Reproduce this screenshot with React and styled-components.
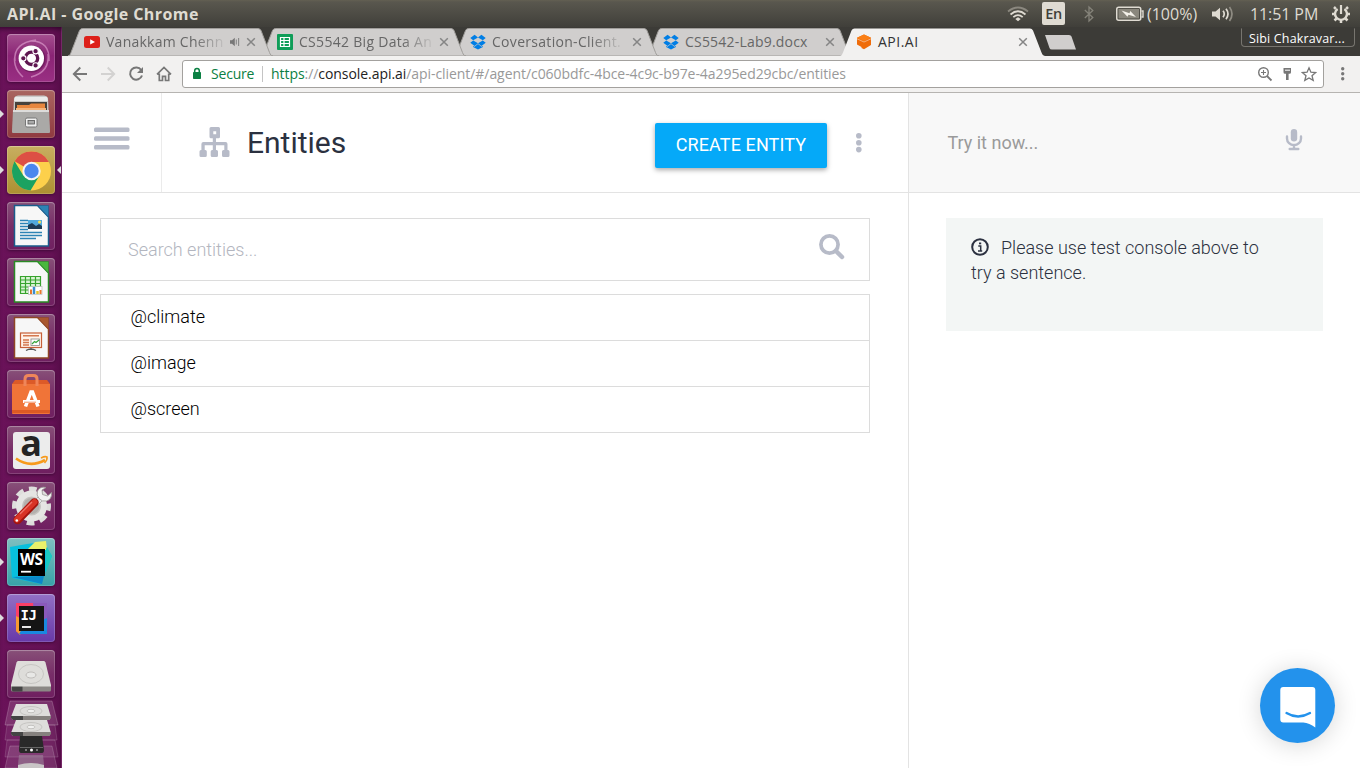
import React from "react";
import styled, { createGlobalStyle, css } from "styled-components";

const ui = `"Open Sans", "Noto Sans", sans-serif`;
const roboto = `Roboto, "Liberation Sans", sans-serif`;
const iconGrey = "#b7bbc8";

const Global = createGlobalStyle`
  * { box-sizing: border-box; }
  html, body { margin: 0; padding: 0; height: 100%; overflow: hidden; }
  svg { display: block; flex: none; }
`;

const Desktop = styled.div`
  width: 1360px;
  height: 768px;
  display: flex;
  flex-direction: column;
  overflow: hidden;
  background: #fff;
  font-family: ${ui};
`;

/* ---------- system panel ---------- */

const SystemBar = styled.header`
  height: 27px;
  flex: none;
  display: flex;
  align-items: center;
  justify-content: space-between;
  padding: 0 9px 0 7px;
  background: linear-gradient(#636052 0, #59574e 2px, #403f3a 100%);
  color: #dfdbd2;
`;

const WindowTitle = styled.div`
  font-size: 16px;
  line-height: 26px;
  font-weight: 700;
  letter-spacing: 0.41px;
  white-space: nowrap;
`;

const Indicators = styled.div`
  display: flex;
  align-items: center;
  height: 27px;
`;

const Indicator = styled.div`
  flex: none;
  width: ${(p) => p.$w}px;
  margin-right: ${(p) => p.$gap || 0}px;
  font-size: 16px;
  line-height: 26px;
  white-space: nowrap;
  letter-spacing: ${(p) => p.$ls || 0}px;
`;

const LangBadge = styled.div`
  width: 23px;
  height: 23px;
  margin-right: 19px;
  border-radius: 2px;
  background: #dfdbd2;
  color: #3f3e39;
  font-size: 14.5px;
  font-weight: 600;
  letter-spacing: -0.4px;
  line-height: 23px;
  text-align: center;
`;

const Workspace = styled.div`
  flex: 1;
  display: flex;
  min-height: 0;
`;

/* ---------- launcher ---------- */

const Launcher = styled.nav`
  width: 62px;
  flex: none;
  display: flex;
  flex-direction: column;
  gap: 8px;
  padding: 7px 0 0 7px;
  background: linear-gradient(90deg, #6a1259 0, #641154 52px, #570d49 61px, #7b2a6c 61px, #7b2a6c 62px);
  box-shadow: inset 0 5px 5px -3px rgba(20, 0, 20, 0.6);
  overflow: hidden;
`;

const Tile = styled.div`
  position: relative;
  width: 48px;
  height: 48px;
  flex: none;
  border-radius: 4px;
  background: ${(p) => p.$bg || "linear-gradient(#875078, #782d68 50%, #6f1f60)"};
  box-shadow: inset 0 0 0 1px rgba(255, 255, 255, 0.16), inset 0 1px 1px rgba(255, 255, 255, 0.2), 0 1px 3px rgba(30, 0, 30, 0.5);
`;

const Pip = styled.span`
  position: absolute;
  top: 20px;
  border: 4px solid transparent;
  ${(p) =>
    p.$side === "left"
      ? css`
          left: -7px;
          border-left-color: #ddd;
          border-right-width: 0;
        `
      : css`
          right: -6px;
          border-right-color: #ddd;
          border-left-width: 0;
        `}
`;

const Pile = styled.div`
  width: 48px;
  height: 68px;
  margin-top: -6px;
  flex: none;
`;

/* ---------- browser chrome ---------- */

const Browser = styled.main`
  flex: 1;
  min-width: 0;
  display: flex;
  flex-direction: column;
`;

const TabStrip = styled.div`
  height: 29px;
  flex: none;
  display: flex;
  align-items: flex-end;
  padding-left: 6px;
  background: #3c3b37;
  position: relative;
`;

const TabBox = styled.div`
  position: relative;
  z-index: ${(p) => p.$z};
  width: 205px;
  height: 28px;
  margin-right: -12px;
  padding: 0 17px 0 16px;
  display: flex;
  align-items: center;
  flex: none;
  color: ${(p) => (p.$active ? "#333" : "#666")};
`;

const TabShape = styled.svg`
  position: absolute;
  inset: 0;
  z-index: -1;
`;

const TabLabel = styled.span`
  margin-left: 6px;
  font-size: 14px;
  line-height: 26px;
  letter-spacing: ${(p) => p.$ls || 0}px;
  white-space: nowrap;
  ${(p) =>
    p.$fade &&
    css`
      mask-image: linear-gradient(90deg, #000 calc(100% - 30px), rgba(0, 0, 0, 0.12));
    `}
`;

const TabEnd = styled.span`
  margin-left: auto;
  display: flex;
  align-items: center;
  gap: 6px;
`;

const NewTab = styled.svg`
  align-self: center;
  margin: 2px 0 0 10px;
`;

const UserChip = styled.div`
  position: absolute;
  right: 5px;
  top: 1px;
  width: 114px;
  height: 19px;
  border: 1px solid #77756f;
  border-top-color: #3c3b37;
  border-radius: 0 0 4px 4px;
  color: #fff;
  font-size: 12.5px;
  line-height: 19px;
  padding-left: 7px;
  white-space: nowrap;
  letter-spacing: ${(p) => p.$ls}px;
`;

const Toolbar = styled.div`
  height: 37px;
  flex: none;
  display: flex;
  align-items: center;
  padding: 0 15px 0 10px;
  background: #f2f1f0;
  border-bottom: 1px solid #b6b4b1;
`;

const NavButtons = styled.div`
  display: flex;
  gap: 12px;
  margin-right: 10px;
`;

const Omnibox = styled.div`
  flex: 1;
  height: 28px;
  display: flex;
  align-items: center;
  border: 1px solid #a3a19e;
  border-radius: 3px;
  background: #fff;
  padding: 0 6px 0 8px;
  font-size: 14px;
  line-height: 26px;
  margin-right: 15.6px;
  white-space: nowrap;
`;

const Secure = styled.span`
  color: #0b8043;
  width: 43px;
  margin-left: 8px;
  letter-spacing: ${(p) => p.$ls}px;
`;

const Divider = styled.i`
  width: 1px;
  height: 16px;
  background: #c4c4c4;
  margin: 0 8px;
`;

const Url = styled.span`
  flex: 1;
  color: #999;
  letter-spacing: ${(p) => p.$ls}px;
`;
const Scheme = styled.span`
  color: #0b8043;
`;
const Host = styled.span`
  color: #222;
`;
const OmniIcons = styled.span`
  display: flex;
  gap: 6px;
`;

/* ---------- web page ---------- */

const Page = styled.div`
  flex: 1;
  display: flex;
  min-height: 0;
  position: relative;
  font-family: ${roboto};
  background: #fff;
`;

const Main = styled.section`
  width: 847px;
  flex: none;
  border-right: 1px solid #e3e3e3;
`;

const Header = styled.div`
  height: 100px;
  display: flex;
  border-bottom: 1px solid #e3e3e3;
`;

const MenuCell = styled.div`
  width: 100px;
  border-right: 1px solid #ebebeb;
  padding: 34px 0 0 32px;
`;

const TitleCell = styled.div`
  flex: 1;
  display: flex;
  align-items: center;
  padding: 0 45px 0 37px;
`;

const Title = styled.h1`
  flex: 1;
  margin: 0 0 0 17px;
  font-size: 30px;
  font-weight: 400;
  line-height: 40px;
  color: #2b3140;
`;

const CreateButton = styled.button`
  width: 172px;
  height: 45px;
  margin: 5px 28px 0 0;
  padding: 0 1px 2px 0;
  border: 0;
  border-radius: 2px;
  background: #05a9f8;
  box-shadow: 0 2px 5px rgba(0, 0, 0, 0.34);
  color: #fff;
  font: 400 18px/43px ${roboto};
  letter-spacing: 0.1px;
  white-space: nowrap;
`;

const Content = styled.div`
  padding: 25px 38px;
`;

const SearchBox = styled.div`
  height: 63px;
  display: flex;
  align-items: center;
  justify-content: space-between;
  border: 1px solid #dcdcdc;
  padding: 0 24px 0 27px;
  color: #b3b6c0;
  font-size: 18px;
  font-weight: 300;
`;

const EntityList = styled.ul`
  margin: 13px 0 0;
  padding: 0;
  list-style: none;
  border: 1px solid #dcdcdc;
`;

const EntityRow = styled.li`
  height: 46px;
  padding-left: 29.5px;
  font-size: 18px;
  line-height: 44px;
  font-weight: 300;
  color: #000;
  & + & {
    border-top: 1px solid #dcdcdc;
  }
  &:first-child {
    height: 45px;
  }
`;

const Side = styled.aside`
  flex: 1;
`;

const TryBar = styled.div`
  height: 100px;
  display: flex;
  align-items: center;
  justify-content: space-between;
  padding: 0 57px 0 38.4px;
  background: #f8f8f8;
  border-bottom: 1px solid #e3e3e3;
  color: #9a9a9a;
  font-size: 18px;
`;

const Hint = styled.div`
  width: 377px;
  height: 113px;
  margin: 25px 0 0 37px;
  padding: 17px 50px 0 25px;
  background: #f3f6f5;
  color: #2b3140;
  font-size: 18px;
  font-weight: 300;
  line-height: 25px;
`;

const HintIcon = styled.svg`
  && {
    display: inline-block;
  }
  vertical-align: -1.5px;
  margin-right: 12px;
`;

const ChatButton = styled.button`
  position: absolute;
  right: 25px;
  bottom: 25px;
  width: 75px;
  height: 75px;
  padding: 0;
  border: 0;
  border-radius: 50%;
  background: #2392ec;
  box-shadow: 0 2px 24px rgba(0, 0, 0, 0.16);
`;

/* ---------- drawings ---------- */

const Youtube = () => (
  <svg width="16" height="16" viewBox="0 0 16 16">
    <rect y="2" width="16" height="12" rx="2.5" fill="#dd2019" />
    <path d="M6.2 5.3v5.2L11 8z" fill="#fff" />
  </svg>
);
const Sheets = () => (
  <svg width="16" height="16" viewBox="0 0 16 16">
    <rect width="16" height="16" rx="1" fill="#0f9d58" />
    <path d="M3.5 3.5h9v9h-9zM3.5 6.5h9M3.5 9.5h9M7 3.5v9" fill="none" stroke="#fff" strokeWidth="1.2" />
  </svg>
);
const Dropbox = () => (
  <svg width="16" height="16" viewBox="0 0 16 16" fill="#007ee5">
    <path d="M4.6.8L8 3.4 3.2 6.3.3 4zM11.4.8L8 3.4l4.8 2.9L15.7 4zM.3 8.8l2.9-2.4L8 9.3l-3.4 2.8zM15.7 8.8l-2.9-2.4L8 9.3l3.4 2.8zM8 10l3.5 2.8 1.4-.9v1L8 15.6l-4.9-2.7v-1l1.4.9z" />
  </svg>
);
const ApiCube = () => (
  <svg width="16" height="16" viewBox="0 0 16 16">
    <path d="M8 .5l7 3.3V11l-7 4.2-2.500-1.200V13L1 10.500V3.800z" fill="#ef6c0a" />
    <path d="M8 .5l7 3.300L8 7 1 3.800z" fill="#fa7f16" />
    <path d="M1 4.800L8 8l7-3.200" fill="none" stroke="#f7d0b0" strokeWidth=".7" />
  </svg>
);
const Close = () => (
  <svg width="10" height="10" viewBox="0 0 10 10">
    <path d="M1.200 1.200l7.600 7.600M8.800 1.200L1.200 8.800" stroke="#858585" strokeWidth="1.500" />
  </svg>
);
const TabSound = () => (
  <svg width="10" height="10" viewBox="0 0 10 10">
    <path d="M0 3.200h2L4.800.800v8.400L2 6.800H0z" fill="#777" />
    <path d="M6.300 2.500v5M8.600 1v8" stroke="#888" strokeWidth="1.100" />
  </svg>
);

const Wifi = () => (
  <svg width="22" height="16" viewBox="0 0 22 16" fill="none" strokeWidth="1.700">
    <path d="M1 5.500Q11-2.500 21 5.500" stroke="#8b887f" />
    <path d="M3.500 8.500Q11 2 18.500 8.500M6.300 11.200Q11 7 15.700 11.200" stroke="#dfdbd2" />
    <path d="M8.300 13L11 11.300 13.700 13 11 15.200z" fill="#dfdbd2" />
  </svg>
);
const Bluetooth = () => (
  <svg width="10" height="18" viewBox="0 0 10 18">
    <path d="M.8 5l8 7.500L5 16V2l3.800 3.500-8 7.500" fill="none" stroke="#85837a" strokeWidth="1.300" />
  </svg>
);
const Battery = () => (
  <svg width="28" height="16" viewBox="0 0 28 16">
    <rect x=".75" y="1.250" width="24" height="13" rx="2" fill="none" stroke="#dfdbd2" strokeWidth="1.500" />
    <rect x="2.500" y="3" width="20.500" height="9.500" fill="#8a877d" />
    <path d="M25.500 5H27v6h-1.500" fill="none" stroke="#dfdbd2" strokeWidth="1.400" />
    <path d="M5.500 4.500l8 2.800.8-2.300 5.700 6-7.500-2.200-1 2z" fill="#f4f1ea" />
  </svg>
);
const Volume = () => (
  <svg width="22" height="16" viewBox="0 0 22 16">
    <path d="M0 5.500h3.500L8 1.800v12.400l-4.500-3.700H0z" fill="#dfdbd2" />
    <path d="M11 4.800q2.500 3.200 0 6.400M14 2.800q4 5.200 0 10.400" fill="none" stroke="#dfdbd2" strokeWidth="1.700" />
    <path d="M17.500 1q5 7 0 14" fill="none" stroke="#8f8c83" strokeWidth="1.700" />
  </svg>
);
const PowerGear = () => (
  <svg width="20" height="20" viewBox="0 0 20 20" fill="none" stroke="#dfdbd2">
    <path d="M6.600 4.900a6 6 0 1 0 6.800 0" strokeWidth="2.400" />
    <path d="M10 1v9" strokeWidth="2.200" />
    <path d="M4.800 4.800L3 3M15.200 4.800L17 3M4 10H1M16 10h3M5.500 14.500l-2 2M14.500 14.500l2 2M10 16v3" strokeWidth="2.500" />
  </svg>
);

const Back = ({ c = "#777" }) => (
  <svg width="16" height="16" viewBox="0 0 16 16">
    <path d="M8.300 1.500L1.800 8l6.500 6.500M2 8h13" fill="none" stroke={c} strokeWidth="1.900" />
  </svg>
);
const Forward = () => (
  <svg width="16" height="16" viewBox="0 0 16 16">
    <path d="M7.700 1.500L14.200 8l-6.500 6.500M14 8H1" fill="none" stroke="#d3d2d1" strokeWidth="1.900" />
  </svg>
);
const Reload = () => (
  <svg width="16" height="16" viewBox="0 0 16 16">
    <path d="M13.200 4A6.100 6.100 0 1 0 14 9.500" fill="none" stroke="#777" strokeWidth="2" />
    <path d="M15 1v6H9z" fill="#777" />
  </svg>
);
const Home = () => (
  <svg width="16" height="16" viewBox="0 0 16 16">
    <path d="M1 8.300L8 1.500l7 6.800M3.300 7.500v7h3.200v-4.200h3v4.200h3.200v-7" fill="none" stroke="#777" strokeWidth="1.700" />
  </svg>
);
const Lock = () => (
  <svg width="12" height="14" viewBox="0 0 12 14">
    <rect x="2" y="5" width="8" height="7" rx=".8" fill="#0b8043" />
    <path d="M3.700 5.500V3.700a2.300 2.300 0 0 1 4.600 0v1.800" fill="none" stroke="#0b8043" strokeWidth="1.500" />
  </svg>
);
const ZoomIn = () => (
  <svg width="16" height="16" viewBox="0 0 16 16" fill="none" stroke="#777">
    <circle cx="6.500" cy="6.500" r="4.800" strokeWidth="1.400" />
    <path d="M10 10l4.500 4.500" strokeWidth="1.800" />
    <path d="M4 6.500h5M6.500 4v5" strokeWidth="1.100" />
  </svg>
);
const Key = () => (
  <svg width="16" height="16" viewBox="0 0 16 16" fill="#777">
    <path d="M4.500 2h7.500v4.200q0 1.500-1.500 1.500H9.600V14H7V7.700h-1q-1.500 0-1.500-1.500z" />
    <path d="M6 4.200h5" stroke="#fff" />
  </svg>
);
const Star = () => (
  <svg width="16" height="16" viewBox="0 0 16 16">
    <path d="M8 1.800l1.900 4.400 4.800.4-3.700 3.100 1.200 4.700L8 11.900l-4.200 2.500L5 9.700 1.300 6.600l4.800-.4z" fill="none" stroke="#777" strokeWidth="1.300" />
  </svg>
);
const Dots = ({ r, step, fill }) => (
  <svg width={r * 2 + 2} height={step * 2 + r * 2 + 2}>
    {[0, 1, 2].map((i) => (
      <circle key={i} cx={r + 1} cy={r + 1 + i * step} r={r} fill={fill} />
    ))}
  </svg>
);

const Burger = () => (
  <svg width="36" height="24" viewBox="0 0 36 24" fill={iconGrey}>
    <rect y=".6" width="35.500" height="4.500" rx="1.500" />
    <rect y="9.300" width="35.500" height="4.500" rx="1.500" />
    <rect y="18" width="35.500" height="4.500" rx="1.500" />
  </svg>
);
const Sitemap = () => (
  <svg width="31" height="32" viewBox="0 0 31 32" fill={iconGrey}>
    <path fillRule="evenodd" d="M12 0h7.500q1.500 0 1.500 1.500v8.300q0 1.500-1.500 1.500H17v3.700h9.500q2 0 2 2V23h.5q1.500 0 1.500 1.500v4q0 1.500-1.500 1.500h-4.500q-1.500 0-1.500-1.500v-4q0-1.500 1.500-1.500h.8v-4.800H17V23h.5q1.500 0 1.500 1.500v4q0 1.500-1.500 1.500h-4.300q-1.500 0-1.500-1.500v-4q0-1.500 1.500-1.500h.6v-4.800H5.700V23h.6q1.500 0 1.500 1.500v4q0 1.500-1.500 1.500H2q-1.500 0-1.500-1.500v-4Q.5 23 2 23h.4v-6q0-2 2-2h9.400v-3.700H12q-1.500 0-1.500-1.500V1.500Q10.500 0 12 0zM14.300 4.200v3.100h2.900V4.200z" />
  </svg>
);
const Magnifier = () => (
  <svg width="26" height="32" viewBox="0 0 26 32" fill="none" stroke={iconGrey}>
    <circle cx="10.500" cy="10.500" r="8.600" strokeWidth="3.700" />
    <path d="M17 17l6 6" strokeWidth="4.500" strokeLinecap="round" />
  </svg>
);
const Mic = () => (
  <svg width="18" height="28" viewBox="0 0 18 28" fill={"none"} stroke={iconGrey}>
    <rect x="5.800" y="0" width="6.400" height="12.500" rx="3.200" fill={iconGrey} stroke="none" />
    <path d="M2 7.500v2a7 6.600 0 0 0 14 0v-2M9 16v4M4.700 20h8.600" strokeWidth="2.400" strokeLinecap="round" />
  </svg>
);

/* launcher artwork, 48 x 48 each */
const Art = ({ children }) => (
  <svg width="48" height="48" viewBox="0 0 48 48">
    {children}
  </svg>
);
const DashArt = () => (
  <Art>
    <g fill="none" stroke="#e4a8d6" strokeWidth="1.500" opacity=".6">
      <path d="M24 7Q43 7 42 27M41 20Q43 38 24 43M16 43Q4 32 9 18M8 27Q6 9 29 6" />
    </g>
    <circle cx="25" cy="25" r="13.500" fill="#3c0a32" opacity=".35" />
    <circle cx="24.300" cy="24.300" r="12.700" fill="#fff" />
    <circle cx="24.500" cy="24.300" r="6.200" fill="none" stroke="#5e1650" strokeWidth="3.300" />
    <g fill="#5e1650" stroke="#fff" strokeWidth="1.100">
      <circle cx="16.300" cy="24.300" r="2.700" />
      <circle cx="28.600" cy="17.200" r="2.700" />
      <circle cx="28.600" cy="31.400" r="2.700" />
    </g>
  </Art>
);
const FilesArt = () => (
  <Art>
    <path d="M7 8q1-2.500 4-2.500h26q3 0 4 2.500l1.500 34H5.500z" fill="#c9c9c7" />
    <path d="M8 7h32l1 4H7z" fill="#ebebea" />
    <rect x="8" y="12" width="32" height="9" fill="#47423c" />
    <path d="M10 15h12l2-1.500h14V21H10z" fill="#e8873e" />
    <path d="M9 18h30v3H9z" fill="#f5b57c" />
    <path d="M6 20h36l1 22q0 1-1 1H6q-1 0-1-1z" fill="#aaa9a7" />
    <path d="M6 20h36v2H6z" fill="#dddcdb" />
    <rect x="18.500" y="28" width="11.500" height="9" rx="1.500" fill="#eee" stroke="#777" />
    <rect x="21" y="30.500" width="6.500" height="3.500" fill="#aaa" stroke="#555" strokeWidth=".8" />
  </Art>
);
const ChromeArt = () => (
  <Art>
    <circle cx="24.500" cy="25" r="19.500" fill="#fdd04b" />
    <path d="M24.500 25L7.600 15.300A19.500 19.500 0 0 1 41.400 15.300L41.800 16H24.500z" fill="#dd5044" />
    <path d="M7.600 15.300A19.500 19.500 0 0 0 23.500 44.500L32.500 29.600 24.500 34 16 29z" fill="#1ba261" />
    <circle cx="24.500" cy="25" r="9.200" fill="#f4f4f4" />
    <circle cx="24.500" cy="25" r="7.200" fill="#4a87ee" />
  </Art>
);
const DocArt = ({ color, light, children }) => (
  <Art>
    <path d="M7.500 3.500h23l11 11.500v29h-34z" fill="#f7f7f7" stroke={color} strokeWidth="1.500" />
    <path d="M30.500 3.500h11V15z" fill={light} stroke={color} strokeWidth=".6" />
    {children}
  </Art>
);
const WriterArt = () => (
  <DocArt color="#1a5c8c" light="#2d83b5">
    <path d="M13 18.500h8M13 21.500h8M13 24.500h8M13 27.500h8M13 30.500h22M13 33.500h22M13 36.500h16" stroke="#2d83b5" strokeWidth="1.600" />
    <rect x="21" y="18" width="14" height="9" fill="#51a9dc" />
    <path d="M21 27v-4l4-2 4 3 3-2 3 2v3z" fill="#1d3c55" />
    <circle cx="32.500" cy="20" r="1.500" fill="#f5e14c" />
  </DocArt>
);
const CalcArt = () => (
  <DocArt color="#2a8a25" light="#49b73d">
    <path d="M13.500 18.500h20v17h-20z" fill="#d9f3d4" />
    <path d="M13.500 18.500h20v17h-20zM13.500 22h20M13.500 25.500h20M13.500 29h20M13.500 32h20M18.500 18.500v17M23.500 18.500v17M28.500 18.500v17" fill="none" stroke="#37a32e" strokeWidth="1.200" />
    <rect x="21.500" y="28.500" width="13.500" height="8" fill="#fff" stroke="#bbb" strokeWidth=".7" />
    <path d="M24 36v-4.500M33.500 36v-4" stroke="#e8762d" strokeWidth="2" />
    <path d="M27 36v-7" stroke="#3b8dce" strokeWidth="2.500" />
    <path d="M30.500 36v-3" stroke="#e6c229" strokeWidth="2.500" />
  </DocArt>
);
const ImpressArt = () => (
  <DocArt color="#8f4524" light="#a9582f">
    <rect x="13.500" y="19" width="21" height="14.500" fill="#fff3ea" stroke="#c76038" strokeWidth="1.200" />
    <path d="M16 21.800h16M16 26h6M16 28.500h6M16 31h6" stroke="#d4784f" strokeWidth="1.400" />
    <rect x="24" y="25" width="8.500" height="6.500" fill="#fff" stroke="#888" strokeWidth=".8" />
    <path d="M25 30l2.500-2.500 1.500 1 3-2.500" fill="none" stroke="#36a53b" strokeWidth="1.200" />
    <path d="M24 34v2M19 36.500q5-3 10 0" stroke="#555" strokeWidth="1.400" fill="none" />
  </DocArt>
);
const SoftwareArt = () => (
  <Art>
    <path d="M5 14l3-4h32l3 4v29H5z" fill="#dc5a28" />
    <path d="M5 14h38v29q0 1-1 1H6q-1 0-1-1z" fill="#f07438" />
    <path d="M5 40h38v3H5z" fill="#dc5a24" />
    <path d="M18 16V9q0-3.500 3.500-3.500h5Q30 5.500 30 9v7" fill="none" stroke="#ef865a" strokeWidth="3" />
    <path d="M18.500 36.500L24 22h1.500L31 36.500" fill="none" stroke="#fff" strokeWidth="3.500" />
    <path d="M16 31.500h17" stroke="#fff" strokeWidth="3" />
    <path d="M17 32.200h12" stroke="#f07438" strokeWidth=".8" />
  </Art>
);
const AmazonA = styled.span`
  position: absolute;
  left: 7px;
  top: 4px;
  width: 34px;
  height: 36px;
  text-align: center;
  font: 700 36px/26px "Open Sans", sans-serif;
  color: #242424;
`;
const AmazonArt = () => (
  <>
    <Art>
      <rect x="6" y="6" width="37" height="37" rx="3" fill="#ececec" />
      <path d="M9 32.500q14 10 29 1.500" fill="none" stroke="#f79a1c" strokeWidth="2.600" />
      <path d="M34 32q4-2 6-1 .5 3-2.500 6" fill="none" stroke="#f79a1c" strokeWidth="1.600" />
    </Art>
    <AmazonA>a</AmazonA>
  </>
);
const SettingsArt = () => (
  <Art>
    <circle cx="24.500" cy="24" r="16.500" fill="none" stroke="#dededc" strokeWidth="6" strokeDasharray="7.500 5.460" strokeDashoffset="3" />
    <circle cx="24.500" cy="24" r="12.500" fill="#c5c3c0" stroke="#e5e5e3" strokeWidth="6" />
    <circle cx="24.500" cy="24" r="8" fill="#b3b0ad" />
    <path d="M26 20l7-7 4 4-7 7z" fill="#e5e5e5" stroke="#999" strokeWidth=".7" />
    <path d="M39 5.500q-6-1.500-8.500 3.500-1.500 4 1.500 7.500t7.500 2.500q5.500-1.500 5-8.500l-4 3.500-5-1.500-.5-4.500z" fill="#f3f3f2" stroke="#9a9896" strokeWidth=".8" />
    <path d="M10.500 38L27.500 20.500" stroke="#a3150f" strokeWidth="8.500" strokeLinecap="round" />
    <path d="M10 37.500L27.500 20" stroke="#d83426" strokeWidth="6" strokeLinecap="round" />
    <path d="M13 32L25 20" stroke="#f0756a" strokeWidth="1.200" />
    <circle cx="9.800" cy="38.500" r="1.300" fill="#fff" />
  </Art>
);
const Logo = styled.span`
  position: absolute;
  left: ${(p) => p.$x}px;
  top: ${(p) => p.$y}px;
  font: 700 ${(p) => p.$s}px/14px ${(p) => p.$f || `"Open Sans", sans-serif`};
  letter-spacing: ${(p) => p.$ls || 0}px;
  color: #fff;
`;
const WebstormArt = () => (
  <>
    <Art>
      <path d="M3 9l17-3 16-2 9 14-7 17-4 11-29-6z" fill="#08c0dd" />
      <path d="M20 12L28 4l11-1 1 9z" fill="#eaf06a" />
      <path d="M40 9l5 9-6 16V11z" fill="#1cc9c0" />
      <path d="M5 39l30 7 2-8z" fill="#0b87c9" />
      <rect x="11" y="11" width="27" height="27" fill="#000" />
      <path d="M14 33.700h10" stroke="#fff" strokeWidth="1.800" />
    </Art>
    <Logo $x={13} $y={13.5} $s={15.5} $ls={-0.5}>WS</Logo>
  </>
);
const IdeaArt = () => (
  <>
    <Art>
      <path d="M9 9h18l-4 15L9 38z" fill="#fc3f67" />
      <path d="M9 22l10 5-6 14-4-4z" fill="#f89a31" />
      <path d="M26 9h14v17l-10 2z" fill="#8a59ba" />
      <path d="M40 24v16H12l3-5z" fill="#1989df" />
      <rect x="12" y="12" width="25" height="25" fill="#151515" />
      <path d="M15 33h9" stroke="#fff" strokeWidth="1.800" />
    </Art>
    <Logo $x={13.5} $y={14} $s={14} $ls={-0.5} $f={`"DejaVu Sans Mono", monospace`}>IJ</Logo>
  </>
);
const DriveArt = () => (
  <Art>
    <path d="M4 36v4q0 1.500 1.500 1.500h37Q44 41.500 44 40v-4z" fill="#8b8885" />
    <path d="M5 36v4q0 1.500 1.500 1.500h9V36z" fill="#444" />
    <path d="M11 11h26q1 0 1.500 1.500L44 35v1.500H4V35l5.500-22.500Q10 11 11 11z" fill="#deddda" />
    <ellipse cx="24" cy="24" rx="12.500" ry="9.500" fill="none" stroke="#c6c5c2" />
    <ellipse cx="24" cy="25" rx="5" ry="3" fill="#e8e8e6" stroke="#b5b3b0" strokeWidth=".8" />
  </Art>
);
const slab = (y) => (
  <g>
    <path d={`M9 ${y}h31l4 13-2 3H6l-2-3z`} fill="#dedddb" />
    <ellipse cx="24" cy={y + 7} rx="11" ry="4.500" fill="none" stroke="#c6c5c2" />
    <ellipse cx="24" cy={y + 7} rx="4" ry="1.700" fill="#f1f1f0" stroke="#b5b3b0" strokeWidth=".7" />
    <path d={`M4 ${y + 12}h40v2l-2 2H6l-2-2z`} fill="#85817e" />
    <path d={`M4 ${y + 12}h12v4H6l-2-2z`} fill="#444" />
  </g>
);
const PileSvg = styled.svg`
  overflow: visible;
`;
const PileArt = () => (
  <PileSvg width="48" height="68" viewBox="0 0 48 68">
    <path d="M3 1h42l6 24H-2z" fill="#fff" fillOpacity=".14" stroke="#fff" strokeOpacity=".2" />
    <path d="M0 25h48l2 15H-2z" fill="#fff" fillOpacity=".08" stroke="#fff" strokeOpacity=".14" />
    <path d="M0 40h48l3 17H-2z" fill="#fff" fillOpacity=".08" stroke="#fff" strokeOpacity=".14" />
    <path d="M3 46h42l5 22H-2z" fill="#fff" fillOpacity=".12" stroke="#fff" strokeOpacity=".18" />
    <path d="M13 36h22l2 14q0 3-2 3H14q-2 0-2-3z" fill="#292929" />
    <path d="M13 47.500h23" stroke="#666" />
    <circle cx="24.500" cy="50" r="1.500" fill="#fff" />
    <path d="M20 50h-2M29 50h2" stroke="#ccc" />
    {slab(20)}
    {slab(4)}
    <path d="M12 55h24l1 9v4H11v-4z" fill="#9d829a" fillOpacity=".6" />
    <path d="M11 65q13-4 26 0v3H11z" fill="#c9c5c6" />
  </PileSvg>
);

const apps = [
  { art: DashArt, bg: "linear-gradient(#a4508f, #8a2475 45%, #9a2f83)" },
  { art: FilesArt, bg: "linear-gradient(#a96560, #8f3a40)", left: true },
  { art: ChromeArt, bg: "linear-gradient(#c8ae60, #ad9032)", left: true, right: true },
  { art: WriterArt },
  { art: CalcArt },
  { art: ImpressArt },
  { art: SoftwareArt },
  { art: AmazonArt },
  { art: SettingsArt },
  { art: WebstormArt, bg: "linear-gradient(#7fbfc0, #37a2a8)", left: true },
  { art: IdeaArt, bg: "linear-gradient(#9270c4, #6838a8)", left: true },
  { art: DriveArt },
];

const tabs = [
  { icon: Youtube, label: "Vanakkam Chenn", fade: true, sound: true, ls: 0.25 },
  { icon: Sheets, label: "CS5542 Big Data An", fade: true, ls: 0.3 },
  { icon: Dropbox, label: "Coversation-Client.", fade: true, ls: 0.3 },
  { icon: Dropbox, label: "CS5542-Lab9.docx", ls: 0.2 },
  { icon: ApiCube, label: "API.AI", active: true, ls: 0.5 },
];

function Tab({ tab, index }) {
  const Icon = tab.icon;
  return (
    <TabBox $z={tab.active ? 10 : 8 - index} $active={tab.active}>
      <TabShape width="205" height="28" viewBox="0 0 205 28">
        <path
          d="M0 28C2 27.500 2 26.500 3 24.500L11.500 2.500Q12.500.5 14.500.5H190Q192 .5 193 2.500L201.500 24.500C202.500 27 203 27.500 205 28z"
          fill={tab.active ? "#f2f1f0" : "#d0cecd"}
          stroke={tab.active ? "none" : "#a09e9b"}
        />
      </TabShape>
      <Icon />
      <TabLabel $fade={tab.fade} $ls={tab.ls}>
        {tab.label}
      </TabLabel>
      <TabEnd>
        {tab.sound && <TabSound />}
        <Close />
      </TabEnd>
    </TabBox>
  );
}

export default function App() {
  return (
    <Desktop>
      <Global />
      <SystemBar>
        <WindowTitle>API.AI - Google Chrome</WindowTitle>
        <Indicators>
          <Indicator $w={22} $gap={13}><Wifi /></Indicator>
          <LangBadge>En</LangBadge>
          <Indicator $w={10} $gap={22}><Bluetooth /></Indicator>
          <Indicator $w={28} $gap={3}><Battery /></Indicator>
          <Indicator $w={52} $gap={13} $ls={0}>(100%)</Indicator>
          <Indicator $w={22} $gap={16}><Volume /></Indicator>
          <Indicator $w={68} $gap={13} $ls={-0.1}>11:51 PM</Indicator>
          <Indicator $w={20}><PowerGear /></Indicator>
        </Indicators>
      </SystemBar>
      <Workspace>
        <Launcher>
          {apps.map(({ art: Drawing, bg, left, right }, i) => (
            <Tile key={i} $bg={bg}>
              <Drawing />
              {left && <Pip $side="left" />}
              {right && <Pip $side="right" />}
            </Tile>
          ))}
          <Pile><PileArt /></Pile>
        </Launcher>
        <Browser>
          <TabStrip>
            {tabs.map((tab, i) => (
              <Tab key={i} tab={tab} index={i} />
            ))}
            <NewTab width="34" height="17" viewBox="0 0 34 17">
              <path d="M2 1h24q2 0 2.500 1.500L33 15.500H9q-2 0-2.500-1.500z" fill="#d0cecd" />
            </NewTab>
            <UserChip $ls={0.15}>Sibi Chakravar...</UserChip>
          </TabStrip>
          <Toolbar>
            <NavButtons>
              <Back />
              <Forward />
              <Reload />
              <Home />
            </NavButtons>
            <Omnibox>
              <Lock />
              <Secure $ls={-0.2}>Secure</Secure>
              <Divider />
              <Url $ls={-0.06}>
                <Scheme>https</Scheme>://<Host>console.api.ai</Host>
                /api-client/#/agent/c060bdfc-4bce-4c9c-b97e-4a295ed29cbc/entities
              </Url>
              <OmniIcons>
                <ZoomIn />
                <Key />
                <Star />
              </OmniIcons>
            </Omnibox>
            <Dots r={1.7} step={5} fill="#777" />
          </Toolbar>
          <Page>
            <Main>
              <Header>
                <MenuCell><Burger /></MenuCell>
                <TitleCell>
                  <Sitemap />
                  <Title>Entities</Title>
                  <CreateButton>CREATE ENTITY</CreateButton>
                  <Dots r={2.8} step={6.9} fill={iconGrey} />
                </TitleCell>
              </Header>
              <Content>
                <SearchBox>
                  Search entities...
                  <Magnifier />
                </SearchBox>
                <EntityList>
                  <EntityRow>@climate</EntityRow>
                  <EntityRow>@image</EntityRow>
                  <EntityRow>@screen</EntityRow>
                </EntityList>
              </Content>
            </Main>
            <Side>
              <TryBar>
                Try it now...
                <Mic />
              </TryBar>
              <Hint>
                <HintIcon width="18" height="18" viewBox="0 0 18 18">
                  <circle cx="9" cy="9" r="7.800" fill="none" stroke="#2b3140" strokeWidth="2" />
                  <path d="M7.300 7.900H9.700V12.800M7 12.900h4.200" stroke="#2b3140" strokeWidth="1.500" fill="none" />
                  <rect x="8" y="4.500" width="2.200" height="1.800" fill="#2b3140" />
                </HintIcon>
                Please use test console above to try a sentence.
              </Hint>
            </Side>
            <ChatButton aria-label="Chat">
              <svg width="75" height="75" viewBox="0 0 75 75">
                <path d="M23.300 19h29q3 0 3 3v37.500q-6-4.500-12-5h-20q-3 0-3-3V22q0-3 3-3z" fill="#fff" />
                <path d="M26.500 45q11.500 7 23.500 0" fill="none" stroke="#2392ec" strokeWidth="2.300" strokeLinecap="round" />
              </svg>
            </ChatButton>
          </Page>
        </Browser>
      </Workspace>
    </Desktop>
  );
}
